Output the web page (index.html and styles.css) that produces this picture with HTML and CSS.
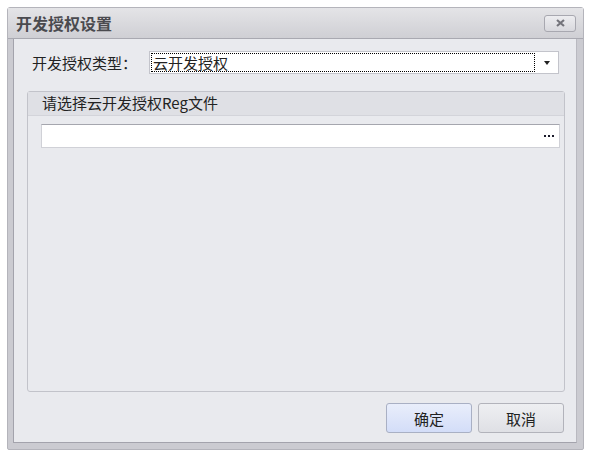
FILE: index.html
```html
<!DOCTYPE html>
<html lang="zh">
<head>
    <meta charset="UTF-8">
    <title>开发授权设置</title>
    <link rel="stylesheet" href="styles.css">
</head>
<body>
<div class="window">
    <div class="titlebar">
        <span class="title">开发授权设置</span>
        <button class="close-btn">
            <svg width="9" height="8" viewBox="0 0 9 8">
                <path d="M1 1 L8 7 M8 1 L1 7" stroke="#74747b" stroke-width="2.2" fill="none"/>
            </svg>
        </button>
    </div>
    <div class="content">
        <div class="type-row">
            <label class="type-label">开发授权类型：</label>
            <div class="combo">
                <span class="combo-text">云开发授权</span>
                <span class="combo-arrow"></span>
            </div>
        </div>

        <div class="group">
            <div class="group-header">请选择云开发授权Reg文件</div>
            <div class="file-box">
                <span class="dots"><i></i><i></i><i></i></span>
            </div>
        </div>

        <!-- кнопки снизу -->
        <div class="buttons">
            <button class="button primary">确定</button>
            <button class="button">取消</button>
        </div>
    </div>
</div>
</body>
</html>
```

FILE: styles.css
```css
body {
    margin: 0;
    padding: 7px 0 0 7px;
    background: #ffffff;
    font-family: "Noto Sans CJK SC", "Liberation Sans", sans-serif;
    font-size: 15px;
    color: #222;
}

.window {
    width: 577px;
    height: 443px;
    box-sizing: border-box;
    background: #cbcbd1;
    border: 1px solid #b4b4bb;
    border-radius: 3px 3px 2px 2px;
    display: flex;
    flex-direction: column;
}

.titlebar {
    height: 30px;
    display: flex;
    align-items: center;
    justify-content: space-between;
    padding: 0 7px 0 8px;
    background: linear-gradient(#e4e4e7, #cfcfd4);
    border-bottom: 1px solid #a9a9b1;
}

.title {
    font-size: 16px;
    font-weight: bold;
    color: #4a4a4f;
}

.close-btn {
    width: 32px;
    height: 17px;
    padding: 0;
    border: 1px solid #a8a8b0;
    border-radius: 3px;
    background: linear-gradient(#ededf0, #d8d8dd);
    display: flex;
    align-items: center;
    justify-content: center;
}

.content {
    flex: 1;
    margin: 0 6px 6px 5px;
    background: #e9eaee;
    border-left: 1px solid #a3a3ac;
    border-bottom: 1px solid #a3a3ac;
    border-right: 1px solid #b9b9c0;
    display: flex;
    flex-direction: column;
}

.type-row {
    display: flex;
    align-items: center;
    margin: 12px 0 0 18px;
}

.type-label {
    width: 117px;
    color: #222;
}

.combo {
    width: 410px;
    height: 23px;
    box-sizing: border-box;
    background: #fff;
    border: 1px solid #c3c4cb;
    display: flex;
    align-items: center;
    padding: 1px;
}

.combo-text {
    flex: 1;
    height: 19px;
    line-height: 18px;
    border: 1px dotted #000;
    padding-left: 1px;
    box-sizing: border-box;
}

.combo-arrow {
    width: 22px;
    height: 19px;
    position: relative;
}

.combo-arrow::after {
    content: "";
    position: absolute;
    left: 9px;
    top: 8px;
    border-left: 3px solid transparent;
    border-right: 3px solid transparent;
    border-top: 4px solid #222;
}

.group {
    margin: 17px 0 0 13px;
    width: 538px;
    height: 301px;
    box-sizing: border-box;
    border: 1px solid #c2c3ca;
    border-radius: 3px;
    background: #e9eaee;
}

.group-header {
    height: 24px;
    line-height: 22px;
    padding-left: 14px;
    background: #dfe0e5;
    border-bottom: 1px solid #d3d4da;
    box-sizing: border-box;
}

.file-box {
    margin: 8px 4px 0 13px;
    height: 24px;
    box-sizing: border-box;
    background: #fff;
    border: 1px solid #d0d1d7;
    border-top: 1px solid #a5a6ae;
    display: flex;
    align-items: center;
    justify-content: flex-end;
    padding-right: 5px;
}

.dots {
    display: flex;
    gap: 2px;
}

.dots i {
    width: 2px;
    height: 2px;
    background: #1a1a2a;
}

.buttons {
    display: flex;
    justify-content: flex-end;
    gap: 6px;
    margin: 11px 12px 0 0;
}

.button {
    width: 86px;
    height: 30px;
    border: 1px solid #b2b3bb;
    border-radius: 3px;
    background: linear-gradient(#eeeff2, #dfe0e5);
    font-family: "Noto Sans CJK SC", sans-serif;
    font-size: 15px;
    color: #222;
    padding: 0;
}

.button.primary {
    background: linear-gradient(#e9eefb, #d3ddf8);
    border-color: #a9b0c4;
}
```
